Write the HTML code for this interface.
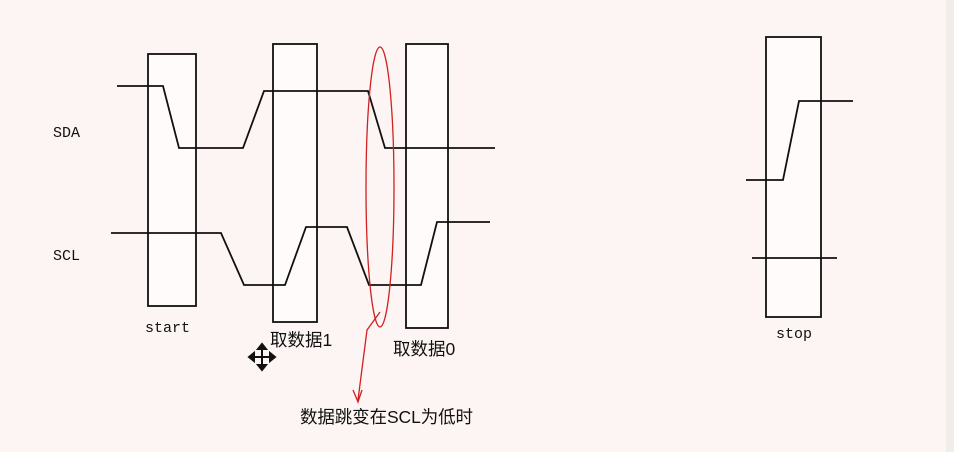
<!DOCTYPE html>
<html><head><meta charset="utf-8"><style>
body{margin:0;background:#fdf5f3;width:954px;height:452px;overflow:hidden}
</style></head><body>
<svg width="954" height="452" xmlns="http://www.w3.org/2000/svg" style="position:absolute;left:0;top:0">
<rect x="946" y="0" width="8" height="452" fill="#f1ede8"/>
<g fill="#fffbfa" stroke="#111" stroke-width="1.8">
<rect x="148" y="54" width="48" height="252"/>
<rect x="273" y="44" width="44" height="278"/>
<rect x="406" y="44" width="42" height="284"/>
<rect x="766" y="37" width="55" height="280"/>
</g>
<g fill="none" stroke="#111" stroke-width="1.8">
<polyline points="117,86 163,86 179,148 243,148 264,91 368,91 385,148 495,148"/>
<polyline points="111,233 221,233 244,285 285,285 306,227 347,227 369,285 421,285 437,222 490,222"/>
<polyline points="746,180 783,180 799,101 853,101"/>
<line x1="752" y1="258" x2="837" y2="258"/>
</g>
<g fill="none" stroke="#d02020" stroke-width="1.3">
<ellipse cx="380" cy="187" rx="14" ry="140"/>
<polyline points="380,312 367,330 358,400"/>
<polyline points="353,390 358,402 362,390"/>
</g>
<g font-family="Liberation Mono, monospace" font-size="15" fill="#111">
<text x="53" y="137">SDA</text>
<text x="53" y="260">SCL</text>
<text x="145" y="332">start</text>
<text x="776" y="338">stop</text>
</g>
<g font-family="Liberation Sans, 'Noto Sans CJK SC', sans-serif" font-size="17.5" fill="#111">
<text x="270" y="346">取数据1</text>
<text x="393" y="355">取数据0</text>
<text x="300" y="423" textLength="173">数据跳变在SCL为低时</text>
</g>
<g stroke="#111" stroke-width="2" fill="#111">
<line x1="262" y1="346" x2="262" y2="368"/>
<line x1="251" y1="357" x2="273" y2="357"/>
<polygon points="262,344 258,349 266,349"/>
<polygon points="262,370 258,365 266,365"/>
<polygon points="249,357 254,353 254,361"/>
<polygon points="275,357 270,353 270,361"/>
</g>
</svg>
</body></html>
